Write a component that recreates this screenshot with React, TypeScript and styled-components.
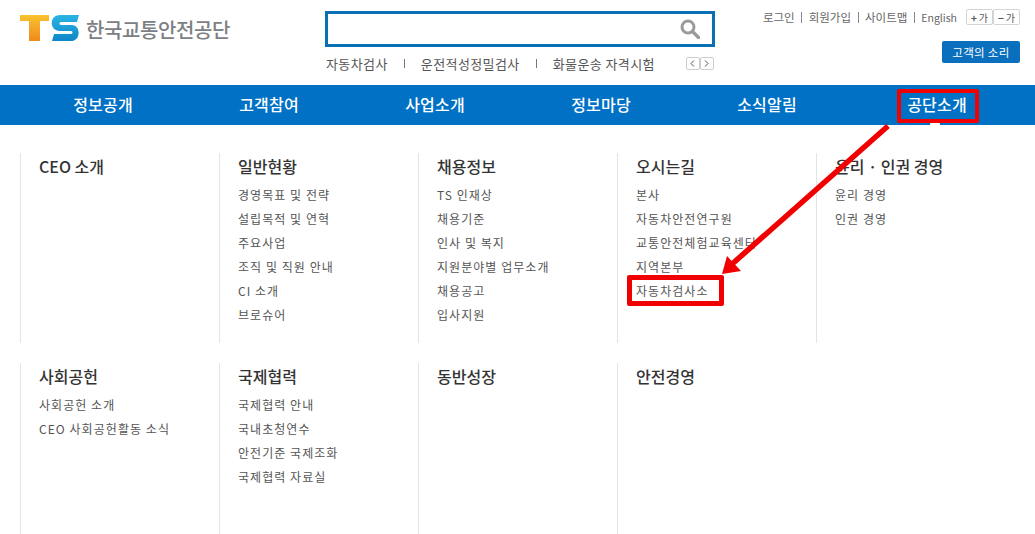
import styled, { createGlobalStyle } from "styled-components";

const FONT = `"Noto Sans CJK KR", "Liberation Sans", sans-serif`;

const GlobalStyle = createGlobalStyle`
  html, body {
    margin: 0;
    padding: 0;
    background: #fff;
    overflow: hidden;
  }
  body {
    font-family: ${FONT};
    color: #555;
  }
  * {
    box-sizing: border-box;
  }
`;

const Page = styled.div`
  position: relative;
  width: 1035px;
  height: 534px;
  overflow: hidden;
`;

const Header = styled.header`
  height: 85px;
  display: flex;
  align-items: flex-start;
  padding-left: 20px;
`;

const Logo = styled.div`
  width: 305px;
  display: flex;
  align-items: center;
  gap: 6px;
  padding-top: 14px;
`;

const LogoName = styled.span`
  font-size: 20px;
  font-weight: 500;
  letter-spacing: -0.4px;
  color: #7c8084;
  line-height: 24px;
  padding-top: 4px;
`;

const SearchColumn = styled.div`
  width: 390px;
  padding-top: 11px;
`;

const SearchBox = styled.div`
  height: 36px;
  border: 3px solid #0a70b5;
  display: flex;
  align-items: center;
  justify-content: flex-end;
  padding-right: 12px;
`;

const QuickRow = styled.div`
  display: flex;
  align-items: center;
  height: 20px;
  margin-top: 6px;
  padding-left: 1px;
  font-size: 13px;
  color: #555;
  letter-spacing: 0.4px;
`;

const QuickSep = styled.span`
  width: 1px;
  height: 9px;
  background: #777;
  margin: 0 16px;
`;

const Pager = styled.div`
  display: flex;
  margin-left: 31px;
`;

const PagerButton = styled.span`
  width: 14px;
  height: 13px;
  border: 1px solid #ccc;
  border-radius: 2px;
  display: flex;
  align-items: center;
  justify-content: center;
  color: #555;
`;

const Utility = styled.div`
  flex: 1;
  display: flex;
  flex-direction: column;
  align-items: flex-end;
  padding: 8px 15px 0 0;
`;

const UtilityRow = styled.div`
  display: flex;
  align-items: center;
  height: 18px;
  font-size: 11.5px;
  color: #666;
`;

const UtilitySep = styled.span`
  width: 1px;
  height: 11px;
  background: #888;
  margin: 0 6.5px;
`;

const EnglishLink = styled.span`
  font-size: 10.5px;
`;

const FontButtons = styled.div`
  display: flex;
  margin-left: 9px;
`;

const FontButton = styled.span`
  width: 27px;
  height: 16px;
  border: 1px solid #d4d4d4;
  border-radius: 2px;
  font-size: 10px;
  color: #555;
  display: flex;
  align-items: center;
  justify-content: center;
  gap: 2px;
`;

const VoiceButton = styled.div`
  width: 78px;
  height: 22px;
  margin-top: 15px;
  background: #0a70bd;
  border-radius: 2px;
  color: #fff;
  font-size: 11.5px;
  letter-spacing: 0.3px;
  display: flex;
  align-items: center;
  justify-content: center;
`;

const Nav = styled.nav`
  height: 40px;
  background: #0071c5;
  display: grid;
  grid-template-columns: repeat(6, 166px);
  padding-left: 20px;
`;

const NavItem = styled.div<{ $current?: boolean }>`
  position: relative;
  display: flex;
  align-items: center;
  justify-content: center;
  padding-bottom: 3px;
  padding-left: ${(p) => (p.$current ? 8 : 0)}px;
  font-size: 16px;
  font-weight: 500;
  letter-spacing: 0.2px;
  color: #fff;
`;

const NavNotch = styled.span`
  position: absolute;
  left: 50%;
  bottom: 0;
  margin-left: -3px;
  width: 10px;
  height: 4px;
  border-radius: 5px 5px 0 0;
  background: #fff;
`;

const Menu = styled.div`
  padding: 28px 0 0 20px;
  display: grid;
  grid-template-columns: repeat(5, 199px);
  grid-auto-rows: 190px;
  row-gap: 20px;
`;

const Column = styled.section`
  border-left: 1px solid #e4e4e4;
  padding: 3px 0 0 18px;
  height: 100%;
`;

const ColumnTitle = styled.h3`
  margin: 0 0 7px;
  font-size: 16px;
  font-weight: 500;
  line-height: 20px;
  color: #333;
  white-space: nowrap;
`;

const MenuItem = styled.div`
  font-size: 12px;
  line-height: 24px;
  color: #555;
  letter-spacing: 1.05px;
  white-space: nowrap;
`;

const Highlight = styled.div<{ $left: number; $top: number; $width: number; $height: number; $weight: number }>`
  position: absolute;
  left: ${(p) => p.$left}px;
  top: ${(p) => p.$top}px;
  width: ${(p) => p.$width}px;
  height: ${(p) => p.$height}px;
  border: ${(p) => p.$weight}px solid #f00000;
  border-radius: 2px;
`;

const ArrowLayer = styled.svg`
  position: absolute;
  left: 0;
  top: 0;
  pointer-events: none;
`;

const NAV = ["정보공개", "고객참여", "사업소개", "정보마당", "소식알림", "공단소개"];

const COLUMNS: { title: string; items: string[] }[] = [
  { title: "CEO 소개", items: [] },
  {
    title: "일반현황",
    items: ["경영목표 및 전략", "설립목적 및 연혁", "주요사업", "조직 및 직원 안내", "CI 소개", "브로슈어"]
  },
  {
    title: "채용정보",
    items: ["TS 인재상", "채용기준", "인사 및 복지", "지원분야별 업무소개", "채용공고", "입사지원"]
  },
  {
    title: "오시는길",
    items: ["본사", "자동차안전연구원", "교통안전체험교육센터", "지역본부", "자동차검사소"]
  },
  { title: "윤리 · 인권 경영", items: ["윤리 경영", "인권 경영"] },
  { title: "사회공헌", items: ["사회공헌 소개", "CEO 사회공헌활동 소식"] },
  {
    title: "국제협력",
    items: ["국제협력 안내", "국내초청연수", "안전기준 국제조화", "국제협력 자료실"]
  },
  { title: "동반성장", items: [] },
  { title: "안전경영", items: [] }
];

function TsLogo() {
  return (
    <svg width="60" height="28" viewBox="0 0 60 28">
      <defs>
        <linearGradient id="tGrad" x1="0" y1="0" x2="0" y2="1">
          <stop offset="0" stopColor="#f9c22e" />
          <stop offset="1" stopColor="#f08a1d" />
        </linearGradient>
        <linearGradient id="sGrad" x1="0" y1="0" x2="0" y2="1">
          <stop offset="0" stopColor="#2cb4e4" />
          <stop offset="1" stopColor="#0f86c8" />
        </linearGradient>
      </defs>
      <path d="M0 1h29v6H20v20H9V7H0z" fill="url(#tGrad)" />
      <path
        d="M59 1L57 8H41c-2 0-2 3 0 3h11c9 0 9 16-1 16H32l2-7h17c2 0 2-3 0-3H40C29 17 29 1 40 1z"
        fill="url(#sGrad)"
      />
    </svg>
  );
}

function SearchIcon() {
  return (
    <svg width="20" height="20" viewBox="0 0 20 20">
      <circle cx="8" cy="8" r="6" fill="none" stroke="#9a9a9a" strokeWidth="3" />
      <path d="M12.5 12.5L18.5 18.5" stroke="#9a9a9a" strokeWidth="3.2" strokeLinecap="round" />
    </svg>
  );
}

function Chevron({ flip }: { flip?: boolean }) {
  return (
    <svg width="5" height="7" viewBox="0 0 5 7">
      <path
        d={flip ? "M1 .5L4 3.5L1 6.5" : "M4 .5L1 3.5L4 6.5"}
        fill="none"
        stroke="#555"
        strokeWidth="1"
      />
    </svg>
  );
}

export default function App() {
  return (
    <Page>
      <GlobalStyle />
      <Header>
        <Logo>
          <TsLogo />
          <LogoName>한국교통안전공단</LogoName>
        </Logo>
        <SearchColumn>
          <SearchBox>
            <SearchIcon />
          </SearchBox>
          <QuickRow>
            <span>자동차검사</span>
            <QuickSep />
            <span>운전적성정밀검사</span>
            <QuickSep />
            <span>화물운송 자격시험</span>
            <Pager>
              <PagerButton>
                <Chevron />
              </PagerButton>
              <PagerButton>
                <Chevron flip />
              </PagerButton>
            </Pager>
          </QuickRow>
        </SearchColumn>
        <Utility>
          <UtilityRow>
            <span>로그인</span>
            <UtilitySep />
            <span>회원가입</span>
            <UtilitySep />
            <span>사이트맵</span>
            <UtilitySep />
            <EnglishLink>English</EnglishLink>
            <FontButtons>
              <FontButton>
                <b>+</b>가
              </FontButton>
              <FontButton>
                <b>−</b>가
              </FontButton>
            </FontButtons>
          </UtilityRow>
          <VoiceButton>고객의 소리</VoiceButton>
        </Utility>
      </Header>
      <Nav>
        {NAV.map((label, idx) => {
          const current = idx === NAV.length - 1;
          return (
            <NavItem key={label} $current={current}>
              {label}
              {current && <NavNotch />}
            </NavItem>
          );
        })}
      </Nav>
      <Menu>
        {COLUMNS.map((col) => (
          <Column key={col.title}>
            <ColumnTitle>{col.title}</ColumnTitle>
            {col.items.map((item) => (
              <MenuItem key={item}>{item}</MenuItem>
            ))}
          </Column>
        ))}
      </Menu>
      <Highlight $left={897} $top={89} $width={82} $height={34} $weight={4} />
      <Highlight $left={627} $top={275} $width={97} $height={31} $weight={5} />
      <ArrowLayer width="1035" height="534" viewBox="0 0 1035 534">
        <path d="M888 126L731 265" stroke="#f00000" strokeWidth="5.5" fill="none" />
        <path d="M722 274L727 256L741 271z" fill="#f00000" />
      </ArrowLayer>
    </Page>
  );
}
